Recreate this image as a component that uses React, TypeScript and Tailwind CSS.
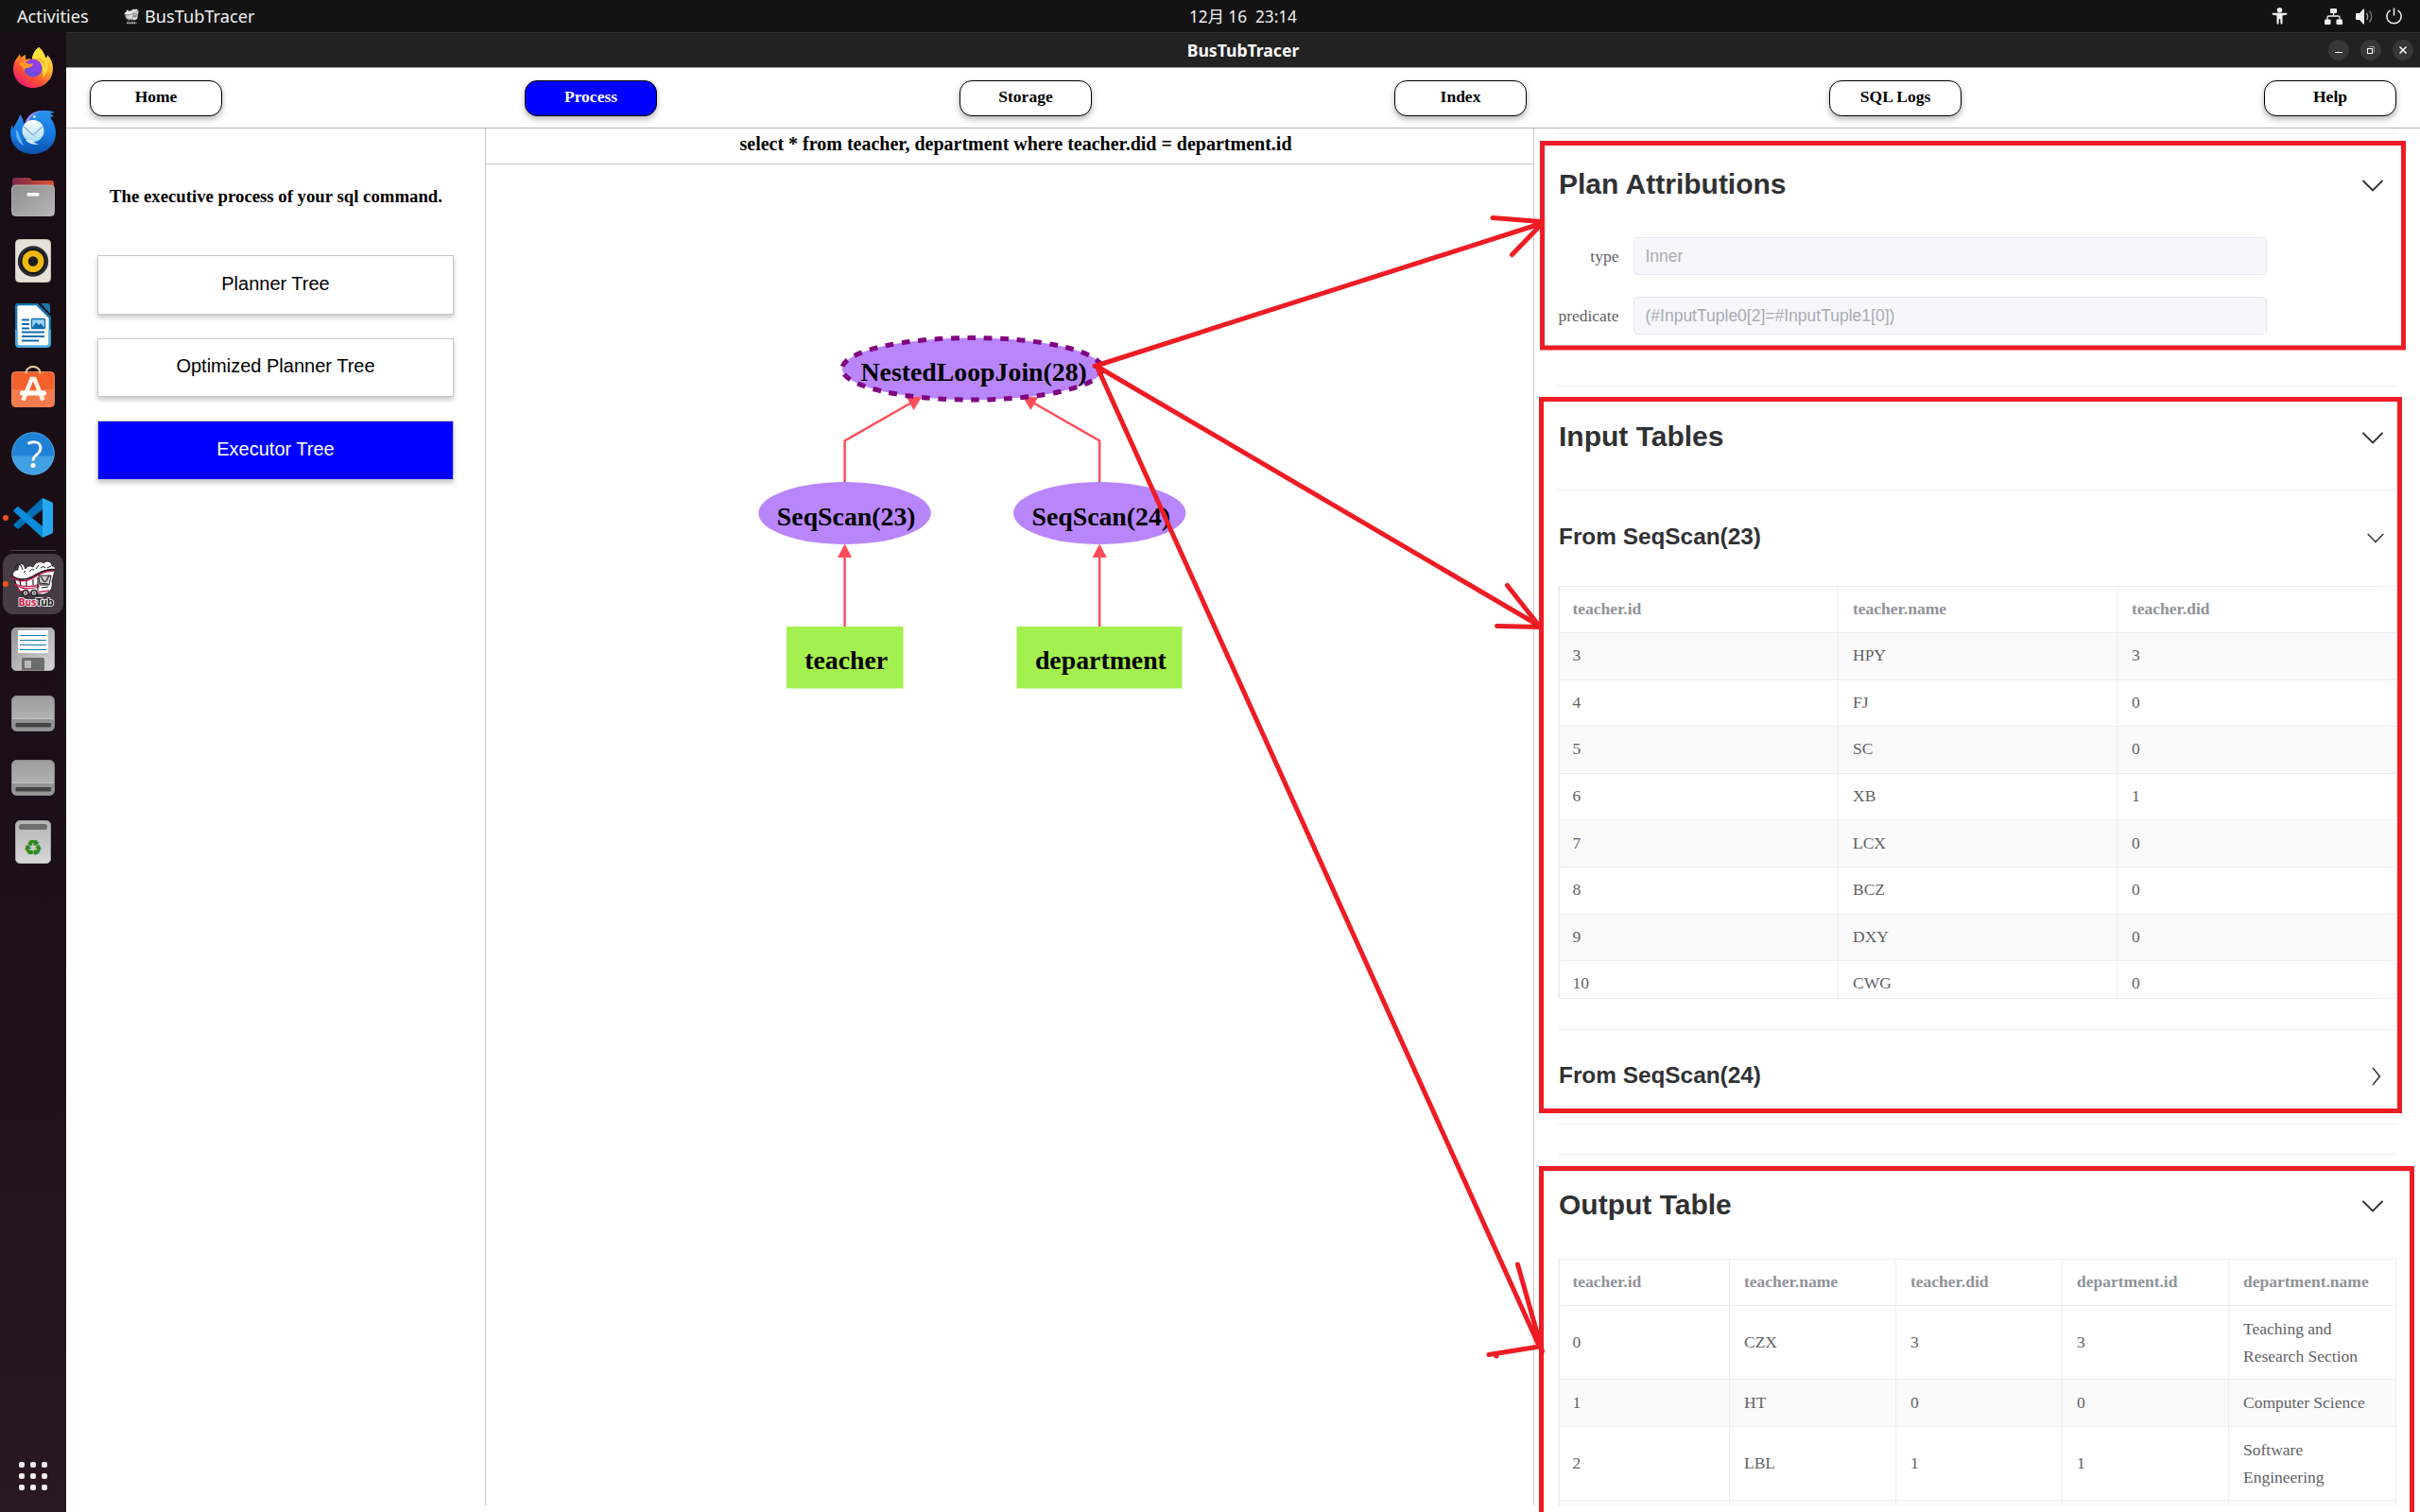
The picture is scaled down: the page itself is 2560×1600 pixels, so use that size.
import React from "react";

const NAV = ["Home", "Process", "Storage", "Index", "SQL Logs", "Help"];
const STEPS = ["Planner Tree", "Optimized Planner Tree", "Executor Tree"];

const INPUT_HEAD = ["teacher.id", "teacher.name", "teacher.did"];
const INPUT_ROWS = [
  ["3", "HPY", "3"],
  ["4", "FJ", "0"],
  ["5", "SC", "0"],
  ["6", "XB", "1"],
  ["7", "LCX", "0"],
  ["8", "BCZ", "0"],
  ["9", "DXY", "0"],
  ["10", "CWG", "0"],
];

const OUTPUT_HEAD = ["teacher.id", "teacher.name", "teacher.did", "department.id", "department.name"];
const OUTPUT_ROWS = [
  ["0", "CZX", "3", "3", "Teaching and Research Section"],
  ["1", "HT", "0", "0", "Computer Science"],
  ["2", "LBL", "1", "1", "Software Engineering"],
];

const SERIF = "font-['Liberation_Serif',serif]";
const SANS = "font-['Liberation_Sans',sans-serif]";

/* ---------- dock icons ---------- */

function Firefox() {
  return (
    <svg width="44" height="46" viewBox="0 0 44 46">
      <defs>
        <linearGradient id="ffBody" x1="0.85" y1="0.1" x2="0.2" y2="1">
          <stop offset="0" stopColor="#fff04d" />
          <stop offset="0.35" stopColor="#ffa527" />
          <stop offset="0.65" stopColor="#ff5134" />
          <stop offset="1" stopColor="#e5127a" />
        </linearGradient>
        <radialGradient id="ffGlobe" cx="0.6" cy="0.2" r="0.9">
          <stop offset="0" stopColor="#a03af0" />
          <stop offset="1" stopColor="#5a50d8" />
        </radialGradient>
      </defs>
      <path d="M28 1c4 3 6 7 7 11 2 0 2-1 2-3 4 4 6 9 6 14 0 12-9 21-21 21S1 35 1 24c0-5 2-10 5-13l2-3 1 4c2-2 3-2 5-3v5c3-1 5-1 7 0 0-5 3-10 7-13z" fill="url(#ffBody)" />
      <path d="M28 1c4 3 6 7 7 11 4 8 3 15-3 22 2-8 0-15-6-20-2-1-4-1-5 0 0-5 3-10 7-13z" fill="#ffe03c" />
      <circle cx="22" cy="23" r="9.6" fill="url(#ffGlobe)" />
      <path d="M7 18c4-2 8-1 11 1l4-1c0 3-4 5-7 5-2 0-2 2-2 4-1-4-3-6-6-9z" fill="#ff9a24" />
      <path d="M24 13c6 1 10 5 10 11 1-3 1-6-1-9-3-3-6-3-9-2z" fill="#ffb52c" />
    </svg>
  );
}

function Thunderbird() {
  return (
    <svg width="48" height="48" viewBox="0 0 48 48">
      <defs>
        <linearGradient id="tbBody" x1="0.5" y1="0" x2="0.5" y2="1">
          <stop offset="0" stopColor="#2a93f0" />
          <stop offset="0.6" stopColor="#1577dd" />
          <stop offset="1" stopColor="#0d4fa8" />
        </linearGradient>
        <linearGradient id="tbMail" x1="0" y1="0" x2="0" y2="1">
          <stop offset="0" stopColor="#ffffff" />
          <stop offset="1" stopColor="#a9dcf8" />
        </linearGradient>
      </defs>
      <path d="M10 5c4 5 3 8 5 10C18 6 25 1 34 1c5 0 9 0 13 2l-5 1 4 3-4 1c4 5 6 11 6 17 0 12-10 22-24 22S0 38 0 24c0-3 1-6 2-8l1 5C4 15 9 12 10 5z" fill="url(#tbBody)" />
      <path d="M16 13C19 5 25 2 33 1c-8 3-12 6-14 12z" fill="#a58bf4" />
      <path d="M6 21c-1 8 2 14 8 17-3-5-3-10-8-17z" fill="#5bb5f8" />
      <circle cx="24" cy="22.500" r="11.500" fill="url(#tbMail)" />
      <path d="M14 18l10 9 10-9" fill="none" stroke="#7fb2dd" strokeWidth="1.3" />
      <path d="M16 32c3 4 8 5 14 5-5-2-6-3-7-5z" fill="#d5efff" />
      <circle cx="25.500" cy="7.500" r="1.300" fill="#fff" />
    </svg>
  );
}

function Files() {
  return (
    <svg width="46" height="42" viewBox="0 0 46 42">
      <defs>
        <linearGradient id="flBack" x1="0" y1="0" x2="1" y2="0">
          <stop offset="0" stopColor="#77284f" />
          <stop offset="1" stopColor="#e0532a" />
        </linearGradient>
        <linearGradient id="flFront" x1="0" y1="0" x2="1" y2="1">
          <stop offset="0" stopColor="#8e8e8e" />
          <stop offset="1" stopColor="#b6b6b6" />
        </linearGradient>
      </defs>
      <path d="M1 14V4q0-3 3-3h14q2 0 3 2l1 1h20q3 0 3 3v9z" fill="url(#flBack)" />
      <rect x="0.500" y="9" width="45" height="32.500" rx="4" fill="url(#flFront)" stroke="#c4c4c4" strokeWidth="0.800" />
      <rect x="16.500" y="17" width="13" height="3.500" rx="1.500" fill="#fff" />
    </svg>
  );
}

function Rhythmbox() {
  return (
    <svg width="38" height="46" viewBox="0 0 38 46">
      <rect x="0.500" y="0.500" width="37" height="45" rx="4" fill="#e6e1d6" stroke="#c8c3b8" />
      <circle cx="19" cy="23.500" r="16.200" fill="#2b2b33" />
      <circle cx="19" cy="23.500" r="13.500" fill="#15151a" />
      <circle cx="19" cy="23.500" r="11.500" fill="#eeb90f" />
      <circle cx="19" cy="23.500" r="5.200" fill="#1c1c1c" />
    </svg>
  );
}

function Writer() {
  return (
    <svg width="38" height="47" viewBox="0 0 38 47">
      <path d="M4 1h19l14 14v27q0 4-4 4H5q-4 0-4-4V4q0-3 3-3z" fill="#fff" stroke="#1173ae" strokeWidth="2.600" />
      <path d="M1.300 28v14q0 3.700 3.700 3.700h28q3.700 0 3.700-3.700V28" fill="none" stroke="#4da8da" strokeWidth="2.600" />
      <path d="M27 0h7q3 0 3 3v8z" fill="#1b75a8" />
      <path d="M7 17.500h8M7 22h8M7 26.500h8M7 30.500h24M7 35h24M7 39.500h18" stroke="#0f6ead" strokeWidth="2" />
      <rect x="17.500" y="16.500" width="14" height="10" rx="1" fill="#9fd4f2" stroke="#0f6ead" strokeWidth="1.400" />
      <path d="M18 26l4-6 3 3 2-2 4 5z" fill="#0f6ead" />
    </svg>
  );
}

function Software() {
  return (
    <svg width="46" height="46" viewBox="0 0 46 46">
      <rect x="0.500" y="7.500" width="45" height="37" rx="4" fill="#f4602c" stroke="#f79a75" strokeWidth="0.800" />
      <path d="M1 26h44v14.500q0 4-4 4H5q-4 0-4-4z" fill="#f47b4c" />
      <path d="M15.500 10V9c0-4 3-7 7.500-7s7.500 3 7.500 7v1" fill="none" stroke="#f1cf9d" strokeWidth="1.800" />
      <path d="M12.500 37.500L21.500 15h3l9 22.500" fill="none" stroke="#fff2ea" strokeWidth="4.600" />
      <rect x="9" y="27.500" width="28" height="5" rx="2.500" fill="#fff" />
    </svg>
  );
}

function Help() {
  return (
    <svg width="46" height="46" viewBox="0 0 46 46">
      <circle cx="23" cy="23" r="22.500" fill="#1f82d6" />
      <path d="M0.700 25.500a22.500 22.500 0 0 0 44.600 0z" fill="#41a0e3" />
      <circle cx="23" cy="23" r="22.300" fill="none" stroke="#6bb6ea" strokeWidth="0.700" />
      <path d="M17.500 12.500c3-2 6-2 8.500-1.500 6 1.500 6 8 2.500 11.500-3 3-5.500 4-5.500 8" fill="none" stroke="#fff" strokeWidth="2.800" />
      <circle cx="23" cy="35.500" r="2.500" fill="#fff" />
    </svg>
  );
}

function VsCode() {
  return (
    <svg width="42" height="44" viewBox="0 0 42 44">
      <path d="M31 1L0.800 28.500q-1 1 0 2l3 2.800q1 .8 2.200 0L31 13z" fill="#0070b8" />
      <path d="M31 43L0.800 15.500q-1-1 0-2l3-2.800q1-.8 2.200 0L31 31z" fill="#0a8bdb" />
      <path d="M31 1l10 4.500q1 .5 1 2v29q0 1.500-1 2L31 43z" fill="#27a9f2" />
    </svg>
  );
}

function BusTubDrawing({ mono }: { mono?: boolean }) {
  const red = mono ? "#bdbdbd" : "#c21e4e";
  const ink = mono ? "#333" : "#241c20";
  return (
    <g>
      <path d="M2 18C2 12 5 10 8 10c0-5 2-7 5-6 2 1 2 4 3 5 1-3 5-4 8-2 2-5 8-7 11-4 4-4 9-1 9 3 3 0 4 2 3 5l-3 11c1 6-1 10-4 12l-5 2-20-1-5-3c-3-4-5-8-6-14z" fill="#fff" stroke={ink} strokeWidth="0.900" />
      <path d="M1 16c7 6 16 5 23 1S38 9 47 10" fill="none" stroke={ink} strokeWidth="2" />
      <path d="M1 17.500c7 6 16 5 23 1S38 10.500 46 11.500" fill="none" stroke={red} strokeWidth="1.500" />
      <path d="M4 25c8 3 18 3 26 1M5 26.500c8 4 18 4 26 1M7 31c6 3 18 4 34 1" fill="none" stroke={red} strokeWidth="1.300" />
      <path d="M4 20l2 5M10 21.500l1 5M17 22v5M24 20v6M29 18v14" stroke={ink} strokeWidth="1.200" />
      <path d="M30 16h13l-2 10H31z" fill="#cfcacd" stroke={ink} strokeWidth="1" />
      <path d="M32 17l4 6M41 16l-4 7M33 29l7-1M31 24l9 1" stroke={ink} strokeWidth="1.200" />
      <path d="M5 9l2-5 4 1 2 5M20 12q2-4 5-2M32 8q3-3 5 0M14 13l2-2M27 9l3-4M39 8l4-2" fill="none" stroke={ink} strokeWidth="1" />
      <circle cx="16" cy="34.500" r="3" fill="#ddd" stroke={ink} strokeWidth="1.500" />
      <circle cx="25" cy="34.500" r="3" fill="#ddd" stroke={ink} strokeWidth="1.500" />
      <circle cx="16" cy="34.500" r="0.900" fill={ink} />
      <circle cx="25" cy="34.500" r="0.900" fill={ink} />
    </g>
  );
}

function BusTub() {
  return (
    <svg width="50" height="52" viewBox="-1 -1 50 52">
      <BusTubDrawing />
      <text x="8.500" y="47.500" fontSize="9.600" fontWeight="bold" fontFamily="'DejaVu Sans',sans-serif" stroke="#fff" strokeWidth="1.600" paintOrder="stroke" textLength="37">
        <tspan fill="#d01848">Bus</tspan>
        <tspan fill="#1b1b1b">Tub</tspan>
      </text>
    </svg>
  );
}

function Floppy() {
  return (
    <svg width="46" height="46" viewBox="0 0 46 46">
      <defs>
        <linearGradient id="fpBody" x1="0" y1="0" x2="1" y2="1">
          <stop offset="0" stopColor="#949494" />
          <stop offset="1" stopColor="#d6d6d6" />
        </linearGradient>
      </defs>
      <rect x="0.500" y="0.500" width="45" height="45" rx="4.500" fill="url(#fpBody)" stroke="#a8a8a8" />
      <rect x="7" y="3" width="32" height="24" fill="#fff" />
      <path d="M9 8.500h28M9 13.500h28M9 18.500h28M9 23.500h28" stroke="#1477a6" strokeWidth="1.200" />
      <path d="M11 45.500V34q0-2 2-2h20q2 0 2 2v11.500z" fill="#6c6c6c" />
      <rect x="14" y="35" width="7" height="8" rx="1" fill="#b9b9b9" />
    </svg>
  );
}

function Drive() {
  return (
    <svg width="46" height="38" viewBox="0 0 46 38">
      <defs>
        <linearGradient id="drBody" x1="0" y1="0" x2="0" y2="1">
          <stop offset="0" stopColor="#9c9c9c" />
          <stop offset="1" stopColor="#bdbdbd" />
        </linearGradient>
      </defs>
      <rect x="0.500" y="0.500" width="45" height="37" rx="5" fill="url(#drBody)" stroke="#8c8c8c" />
      <path d="M1 25h44v8q0 4-4 4H5q-4 0-4-4z" fill="#949494" />
      <path d="M1 24.500h44" stroke="#c9c9c9" strokeWidth="0.800" />
      <rect x="4.500" y="29" width="37.500" height="4.500" rx="1" fill="#444" />
    </svg>
  );
}

function Trash() {
  return (
    <svg width="38" height="46" viewBox="0 0 38 46">
      <defs>
        <linearGradient id="trBody" x1="0" y1="0" x2="0" y2="1">
          <stop offset="0" stopColor="#b4b4b4" />
          <stop offset="1" stopColor="#d8d8d8" />
        </linearGradient>
      </defs>
      <rect x="0.500" y="0.500" width="37" height="45" rx="4.500" fill="url(#trBody)" stroke="#a2a2a2" />
      <rect x="4" y="4" width="30" height="6" rx="2.500" fill="#6f6f6f" />
      <text x="19" y="37.300" textAnchor="middle" fontSize="22" fill="#2c8a1c" stroke="#2c8a1c" strokeWidth="0.600" fontFamily="'DejaVu Sans',sans-serif">♻</text>
    </svg>
  );
}

function DockItem({ children, running }: { children: React.ReactNode; running?: boolean }) {
  return (
    <div className="relative flex h-[68px] shrink-0 items-center justify-center">
      {running && <span className="absolute left-[3px] top-[31px] size-[6px] rounded-full bg-[#e95420]" />}
      {children}
    </div>
  );
}

function Dock() {
  return (
    <aside className="flex w-[70px] shrink-0 flex-col bg-linear-to-b from-[#180d14] via-[#1c0f17] via-55% to-[#2a1820] pt-[4px]">
      <DockItem><Firefox /></DockItem>
      <DockItem><Thunderbird /></DockItem>
      <DockItem><Files /></DockItem>
      <DockItem><Rhythmbox /></DockItem>
      <DockItem><Writer /></DockItem>
      <div className="flex h-[68px] shrink-0 justify-center pt-[8px]"><Software /></div>
      <DockItem><Help /></DockItem>
      <DockItem running><VsCode /></DockItem>
      <div className="mx-auto h-px w-12 shrink-0 bg-[#4a4047]" />
      <div className="relative mx-auto mt-[3px] mb-[3px] flex size-16 shrink-0 items-center justify-center rounded-[11px] bg-[#463c43]">
        <span className="absolute left-0 top-[29px] size-[6px] rounded-full bg-[#e95420]" />
        <BusTub />
      </div>
      <DockItem><Floppy /></DockItem>
      <DockItem><Drive /></DockItem>
      <DockItem><Drive /></DockItem>
      <DockItem><Trash /></DockItem>
      <div className="mx-auto mt-auto mb-[23px] grid grid-cols-3 gap-[6px]">
        {Array.from({ length: 9 }, (_, i) => (
          <span key={i} className="size-[6px] rounded-[2px] bg-[#f0eeee]" />
        ))}
      </div>
    </aside>
  );
}

/* ---------- system bars ---------- */

function TopBar() {
  return (
    <header className="grid h-[34px] shrink-0 grid-cols-[1235px_160px_1fr] items-center bg-[#131313] font-['Noto_Sans','Noto_Sans_CJK_JP',sans-serif] text-[17.5px] leading-[34px] text-[#f0f0f0]">
      <div className="flex items-center pl-[18px] text-[18.2px]">
        <span className="w-[113px]">Activities</span>
        <svg className="mr-[6px]" width="16" height="17" viewBox="0 0 48 50">
          <BusTubDrawing mono />
          <path d="M10 45h30" stroke="#ccc" strokeWidth="6" strokeDasharray="5 2" />
        </svg>
        <span>BusTubTracer</span>
      </div>
      <div className="flex justify-center gap-[9px] pt-px text-[17.2px] leading-[33px] whitespace-nowrap">
        <span>12月 16</span>
        <span>23:14</span>
      </div>
      <div className="flex items-center justify-end pr-[19px]">
        <svg className="mr-[39px]" width="17" height="18" viewBox="0 0 17 18" fill="#efefef">
          <circle cx="8.500" cy="2.700" r="2.700" />
          <path d="M1 5.800h15q1 1 0 1.600l-4.500 1V17q-1 1.500-2 0l-.3-5H7.800l-.3 5q-1 1.500-2 0V8.400L1 7.400q-1-.8 0-1.600z" />
        </svg>
        <svg className="mr-[14px]" width="19" height="17" viewBox="0 0 19 17" fill="#efefef">
          <rect x="6" y="0" width="7" height="5" rx="1" />
          <rect x="0" y="11.500" width="6.500" height="5.500" rx="1" />
          <rect x="12.500" y="11.500" width="6.500" height="5.500" rx="1" />
          <path d="M9.500 5v3M3 12V9.500q0-1.500 1.500-1.500h10q1.500 0 1.500 1.500V12" fill="none" stroke="#efefef" strokeWidth="1.300" />
        </svg>
        <svg className="mr-[14px]" width="18" height="17" viewBox="0 0 18 17">
          <path d="M1 5h3l4-4.500h1v16H8L4 12H1q-1 0-1-1V6q0-1 1-1z" fill="#efefef" />
          <path d="M11.500 5q2.500 3.500 0 7" fill="none" stroke="#aaa" strokeWidth="1.300" />
          <path d="M14.500 2.500q4.500 6 0 12" fill="none" stroke="#777" strokeWidth="1.300" />
        </svg>
        <svg width="17" height="18" viewBox="0 0 17 18" fill="none" stroke="#efefef" strokeWidth="1.500">
          <path d="M4.500 2.800a7.600 7.600 0 1 0 8 0M8.500 0.500v8" />
        </svg>
      </div>
    </header>
  );
}

function TitleBar() {
  return (
    <div className="grid h-[38px] shrink-0 grid-cols-[1fr_auto_1fr] items-center border-t border-b border-t-[#333] border-b-[#a5a5a5] bg-[#222]">
      <span />
      <span className="font-['Noto_Sans',sans-serif] text-[17.6px] leading-9 font-bold text-white">BusTubTracer</span>
      <div className="flex justify-end gap-3 pr-[7px] pb-px">
        <span className="flex size-[22px] items-center justify-center rounded-full bg-[#373737]">
          <svg width="22" height="22"><path d="M7 13.500h8" stroke="#fff" /></svg>
        </span>
        <span className="flex size-[22px] items-center justify-center rounded-full bg-[#373737]">
          <svg width="22" height="22" fill="none">
            <path d="M9 7.500h5.500v6" stroke="#999" />
            <rect x="7.500" y="9.500" width="5" height="5" stroke="#fff" />
          </svg>
        </span>
        <span className="flex size-[22px] items-center justify-center rounded-full bg-[#373737]">
          <svg width="22" height="22"><path d="M7.500 7.500l7 7M14.500 7.500l-7 7" stroke="#fff" strokeWidth="1.500" /></svg>
        </span>
      </div>
    </div>
  );
}

/* ---------- plan tree ---------- */

function Node({ cx, y, children }: { cx: number; y: number; children: string }) {
  return (
    <text x={cx} y={y} textAnchor="middle" fontSize="27.8" fontWeight="bold" fill="#000" fontFamily="'Liberation Serif',serif">
      {children}
    </text>
  );
}

function PlanTree() {
  return (
    <svg className="block" width="1108" height="1419" viewBox="514 174 1108 1419">
      <g fill="none" stroke="#ff4d5a" strokeWidth="2.500">
        <path d="M893.600 663V585" />
        <path d="M1163.200 663V585" />
        <path d="M893.600 512V466.500L966 425" />
        <path d="M1163.200 512V466.500L1091 425" />
      </g>
      <g fill="#ff4d5a">
        <path d="M893.600 575.500l7.600 14.500h-15.200z" />
        <path d="M1163.200 575.500l7.600 14.500h-15.200z" />
        <path d="M975.500 419.500l-9 14.500-7.500-13.500z" />
        <path d="M1081.500 419.500l9 14.500 7.500-13.500z" />
      </g>
      <g fill="#b886fa">
        <ellipse cx="893.600" cy="543" rx="91.200" ry="33" />
        <ellipse cx="1163.200" cy="543" rx="91.200" ry="33" />
        <ellipse cx="1028.400" cy="390.300" rx="137.500" ry="32.800" stroke="#800080" strokeWidth="5" strokeDasharray="8.7 8.7" />
      </g>
      <g fill="#a4f04f">
        <rect x="832" y="663" width="123.500" height="65.500" />
        <rect x="1075.500" y="663" width="175" height="65.500" />
      </g>
      <Node cx={1030.2} y={403}>NestedLoopJoin(28)</Node>
      <Node cx={895.2} y={556}>SeqScan(23)</Node>
      <Node cx={1164.8} y={556}>SeqScan(24)</Node>
      <Node cx={895.2} y={708}>teacher</Node>
      <Node cx={1164.4} y={708}>department</Node>
    </svg>
  );
}

/* ---------- right panel ---------- */

function Arrow({ big, right }: { big?: boolean; right?: boolean }) {
  if (right)
    return (
      <svg className="mt-[2px] mr-4" width="10" height="20" viewBox="0 0 10 20" fill="none" stroke="#303133" strokeWidth="1.500">
        <path d="M1 1l7.500 9L1 19" />
      </svg>
    );
  return big ? (
    <svg className="mt-[2px] mr-[13px]" width="24" height="14" viewBox="0 0 24 14" fill="none" stroke="#303133" strokeWidth="1.900">
      <path d="M1.500 2L12 12.500 22.500 2" />
    </svg>
  ) : (
    <svg className="mt-[3px] mr-[13px]" width="18" height="11" viewBox="0 0 18 11" fill="none" stroke="#303133" strokeWidth="1.500">
      <path d="M0.700 1L9 9.500 17.300 1" />
    </svg>
  );
}

function SectionHeader({ title }: { title: string }) {
  return (
    <div className={`flex h-[106px] items-center justify-between text-[30px] leading-[34px] font-bold text-[#303133] ${SANS}`}>
      <span className="pl-px">{title}</span>
      <Arrow big />
    </div>
  );
}

function Field({ label, value }: { label: string; value: string }) {
  return (
    <div className="mb-[23px] flex">
      <label className="mr-[15px] w-[65px] text-right text-[17.5px] leading-10 text-[#606266]">{label}</label>
      <div className={`h-10 w-[670px] rounded-[5px] border border-[#e4e7ed] bg-[#f5f7fa] px-[12px] text-[17.5px] leading-[38px] text-[#a8abb2] ${SANS}`}>
        {value}
      </div>
    </div>
  );
}

function InputTable() {
  return (
    <div className="flex h-[437px] flex-col overflow-hidden border-t border-b border-l-2 border-[#ebeef5] text-[17.5px] leading-[28px] text-[#606266]">
      <div className="grid h-[49px] shrink-0 grid-cols-[295px_295px_1fr] border-b border-[#ebeef5] font-bold text-[#909399]">
        {INPUT_HEAD.map((h, i) => (
          <span key={h} className={`flex items-center pb-[2px] ${i > 0 ? "pl-[15px]" : "pl-[13.5px]"} ${i < 2 ? "border-r border-[#ebeef5]" : ""}`}>{h}</span>
        ))}
      </div>
      {INPUT_ROWS.map((row, r) => (
        <div key={r} className={`grid h-[49.6px] shrink-0 grid-cols-[295px_295px_1fr] border-b border-[#ebeef5] ${r % 2 === 0 ? "bg-[#fafafa]" : ""}`}>
          {row.map((c, i) => (
            <span key={i} className={`flex items-center ${r === 0 || r === 3 ? "pb-[3px]" : "pb-[2px]"} ${i > 0 ? "pl-[15px]" : "pl-[13.5px]"} ${i < 2 ? "border-r border-[#ebeef5]" : ""}`}>{c}</span>
          ))}
        </div>
      ))}
    </div>
  );
}

function OutputTable() {
  return (
    <div className="flex flex-col border-t border-r border-l-2 border-[#ebeef5] text-[17.5px] leading-[28.5px] text-[#606266]">
      <div className="grid h-[49px] shrink-0 grid-cols-[180px_176px_176px_176px_1fr] border-b border-[#ebeef5] font-bold text-[#909399]">
        {OUTPUT_HEAD.map((h, i) => (
          <span key={h} className={`flex items-center pb-px ${i > 0 ? "pl-[15px]" : "pl-[13.5px]"} ${i < 4 ? "border-r border-[#ebeef5]" : ""}`}>{h}</span>
        ))}
      </div>
      {OUTPUT_ROWS.map((row, r) => (
        <div key={r} className={`grid shrink-0 grid-cols-[180px_176px_176px_176px_1fr] border-b border-[#ebeef5] ${r === 1 ? "h-[50px] bg-[#fafafa]" : "h-[78px]"}`}>
          {row.map((c, i) => (
            <span key={i} className={`flex items-center pr-3 ${i > 0 ? "pl-[15px]" : "pl-[13.5px]"} ${i < 4 ? "border-r border-[#ebeef5]" : ""}`}>{c}</span>
          ))}
        </div>
      ))}
      <div className="grid h-20 shrink-0 grid-cols-[180px_176px_176px_176px_1fr] bg-[#fafafa]">
        {OUTPUT_HEAD.map((h, i) => (
          <span key={h} className={i < 4 ? "border-r border-[#ebeef5]" : ""} />
        ))}
      </div>
    </div>
  );
}

function Details() {
  return (
    <section className="flex w-[938px] shrink-0 flex-col overflow-hidden border-l border-[#c8c8c8] pt-[5px] pr-[25px] pl-[25px]">
      <div className="h-[267px] shrink-0 border-t border-[#ebeef5]">
        <SectionHeader title="Plan Attributions" />
        <div className="mt-[3px] -ml-[0.5px]">
          <Field label="type" value="Inner" />
          <Field label="predicate" value="(#InputTuple0[2]=#InputTuple1[0])" />
        </div>
      </div>

      <div className="h-[110px] shrink-0 border-t border-[#ebeef5]">
        <SectionHeader title="Input Tables" />
      </div>
      <div className="h-[571px] shrink-0 border-t border-[#ebeef5]">
        <div className={`flex h-[101px] items-center justify-between pb-[3px] text-[24.375px] leading-7 font-bold text-[#303133] ${SANS}`}>
          <span className="pl-px">From SeqScan(23)</span>
          <Arrow />
        </div>
        <InputTable />
      </div>
      <div className="h-[82px] shrink-0 border-t border-b border-[#ebeef5]">
        <div className={`flex h-20 items-center justify-between pt-4 text-[24.375px] leading-7 font-bold text-[#303133] ${SANS}`}>
          <span className="pl-px">From SeqScan(24)</span>
          <Arrow right />
        </div>
      </div>
      <div className="mt-[18px] h-8 shrink-0 border-t border-[#ebeef5]" />

      <div className="shrink-0 border-t border-[#ebeef5]">
        <SectionHeader title="Output Table" />
        <div className="pt-1">
          <OutputTable />
        </div>
      </div>
    </section>
  );
}

/* ---------- hand-drawn callouts over the window ---------- */

function Callouts() {
  return (
    <svg
      className="pointer-events-none absolute inset-0"
      width="2560"
      height="1600"
      viewBox="0 0 2560 1600"
      fill="none"
      stroke="#ee1c24"
      strokeWidth="5"
      strokeLinecap="round"
    >
      <g strokeLinecap="butt">
        <rect x="1631.500" y="151.500" width="911" height="216.500" />
        <rect x="1630.500" y="422.500" width="908" height="753" />
        <path d="M1630.500 1600V1236.500H2551.500V1600" />
      </g>
      <path d="M1158 387.500L1629 237M1579 230.500L1630 234.500M1599.500 269.500L1630 238" />
      <path d="M1161 388L1628 662M1594.500 619.500L1628 662M1583.500 662.500L1628 663.500" />
      <path d="M1161 389L1628 1424M1605.500 1338L1631.500 1430M1575 1433.500L1628 1425M1583 1434v1" />
    </svg>
  );
}

export default function App() {
  return (
    <div className={`relative flex h-[1600px] w-[2560px] flex-col overflow-hidden bg-white text-black ${SERIF}`}>
      <TopBar />
      <div className="flex min-h-0 flex-1">
        <Dock />
        <div className="flex min-w-0 flex-1 flex-col">
          <TitleBar />
          <nav className="flex h-[64px] shrink-0 items-start justify-between border-b border-[#b4b4b4] px-[25px] pt-[13px]">
            {NAV.map((n) => (
              <button
                key={n}
                className={`h-[38px] w-[140px] rounded-[13px] border border-black pb-[3px] text-[17.5px] font-bold shadow-[0_3px_6px_rgba(0,0,0,0.3)] ${
                  n === "Process" ? "bg-[#0000ff] text-white" : "bg-white"
                }`}
              >
                {n}
              </button>
            ))}
          </nav>
          <main className="flex h-[1457px] shrink-0">
            <section className="flex w-[444px] shrink-0 flex-col items-center border-r border-[#c8c8c8] pr-px">
              <h2 className="mt-[61px] pl-[2px] text-[18.75px] leading-[22px] font-bold">The executive process of your sql command.</h2>
              <div className="mt-[51px] flex flex-col gap-[25px]">
                {STEPS.map((s) => (
                  <button
                    key={s}
                    className={`h-[62.5px] w-[377px] border border-[#c8c8c8] text-[20px] shadow-[0_3px_5px_rgba(0,0,0,0.22)] ${SANS} ${
                      s === "Optimized Planner Tree" ? "pb-[4px] pl-px" : "pb-[2px] pl-px"
                    } ${s === "Executor Tree" ? "bg-[#0000ff] text-white" : "bg-white"}`}
                  >
                    {s}
                  </button>
                ))}
              </div>
            </section>
            <section className="flex min-w-0 flex-1 flex-col">
              <div className="h-[38px] shrink-0 border-b border-[#c8c8c8] text-center text-[20px] leading-[32px] font-bold">
                <span className="pl-[13px]">select * from teacher, department where teacher.did = department.id</span>
              </div>
              <PlanTree />
            </section>
            <Details />
          </main>
        </div>
      </div>
      <Callouts />
    </div>
  );
}
